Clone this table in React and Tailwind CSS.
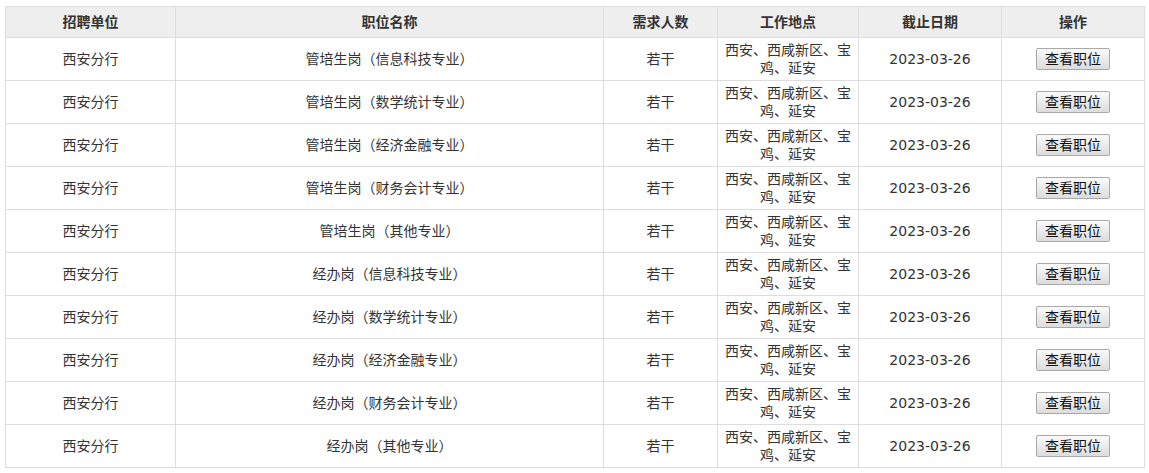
import React from "react";

const jobs = [
  "管培生岗（信息科技专业）",
  "管培生岗（数学统计专业）",
  "管培生岗（经济金融专业）",
  "管培生岗（财务会计专业）",
  "管培生岗（其他专业）",
  "经办岗（信息科技专业）",
  "经办岗（数学统计专业）",
  "经办岗（经济金融专业）",
  "经办岗（财务会计专业）",
  "经办岗（其他专业）",
];

const headers = ["招聘单位", "职位名称", "需求人数", "工作地点", "截止日期", "操作"];
const widths = ["w-[170px]", "w-[428px]", "w-[114px]", "w-[141px]", "w-[143px]", "w-[143px]"];

export default function App() {
  return (
    <div
      className="bg-white pt-[6px] pl-[5px] text-[14px] text-[#333]"
      style={{ fontFamily: '"DejaVu Sans", "Noto Sans CJK SC", sans-serif' }}
    >
      <table className="border-collapse table-fixed w-[1140px] text-center">
        <thead>
          <tr className="h-[31px] bg-[#eeeeee]">
            {headers.map((h, i) => (
              <th key={h} className={`${widths[i]} border border-[#dddddd] font-bold p-0`}>
                {h}
              </th>
            ))}
          </tr>
        </thead>
        <tbody>
          {jobs.map((job) => (
            <tr key={job} className="h-[43px]">
              <td className="border border-[#dddddd] p-0">西安分行</td>
              <td className="border border-[#dddddd] p-0">{job}</td>
              <td className="border border-[#dddddd] p-0">若干</td>
              <td className="border border-[#dddddd] px-[7px] py-0 leading-[18px]">西安、西咸新区、宝鸡、延安</td>
              <td className="border border-[#dddddd] p-0">2023-03-26</td>
              <td className="border border-[#dddddd] p-0">
                <button className="h-[22px] px-[8px] border border-[#a9a9a9] rounded-[2px] bg-gradient-to-b from-[#fafafa] to-[#dcdcdc] text-[14px] text-[#111] leading-[18px]">
                  查看职位
                </button>
              </td>
            </tr>
          ))}
        </tbody>
      </table>
    </div>
  );
}
